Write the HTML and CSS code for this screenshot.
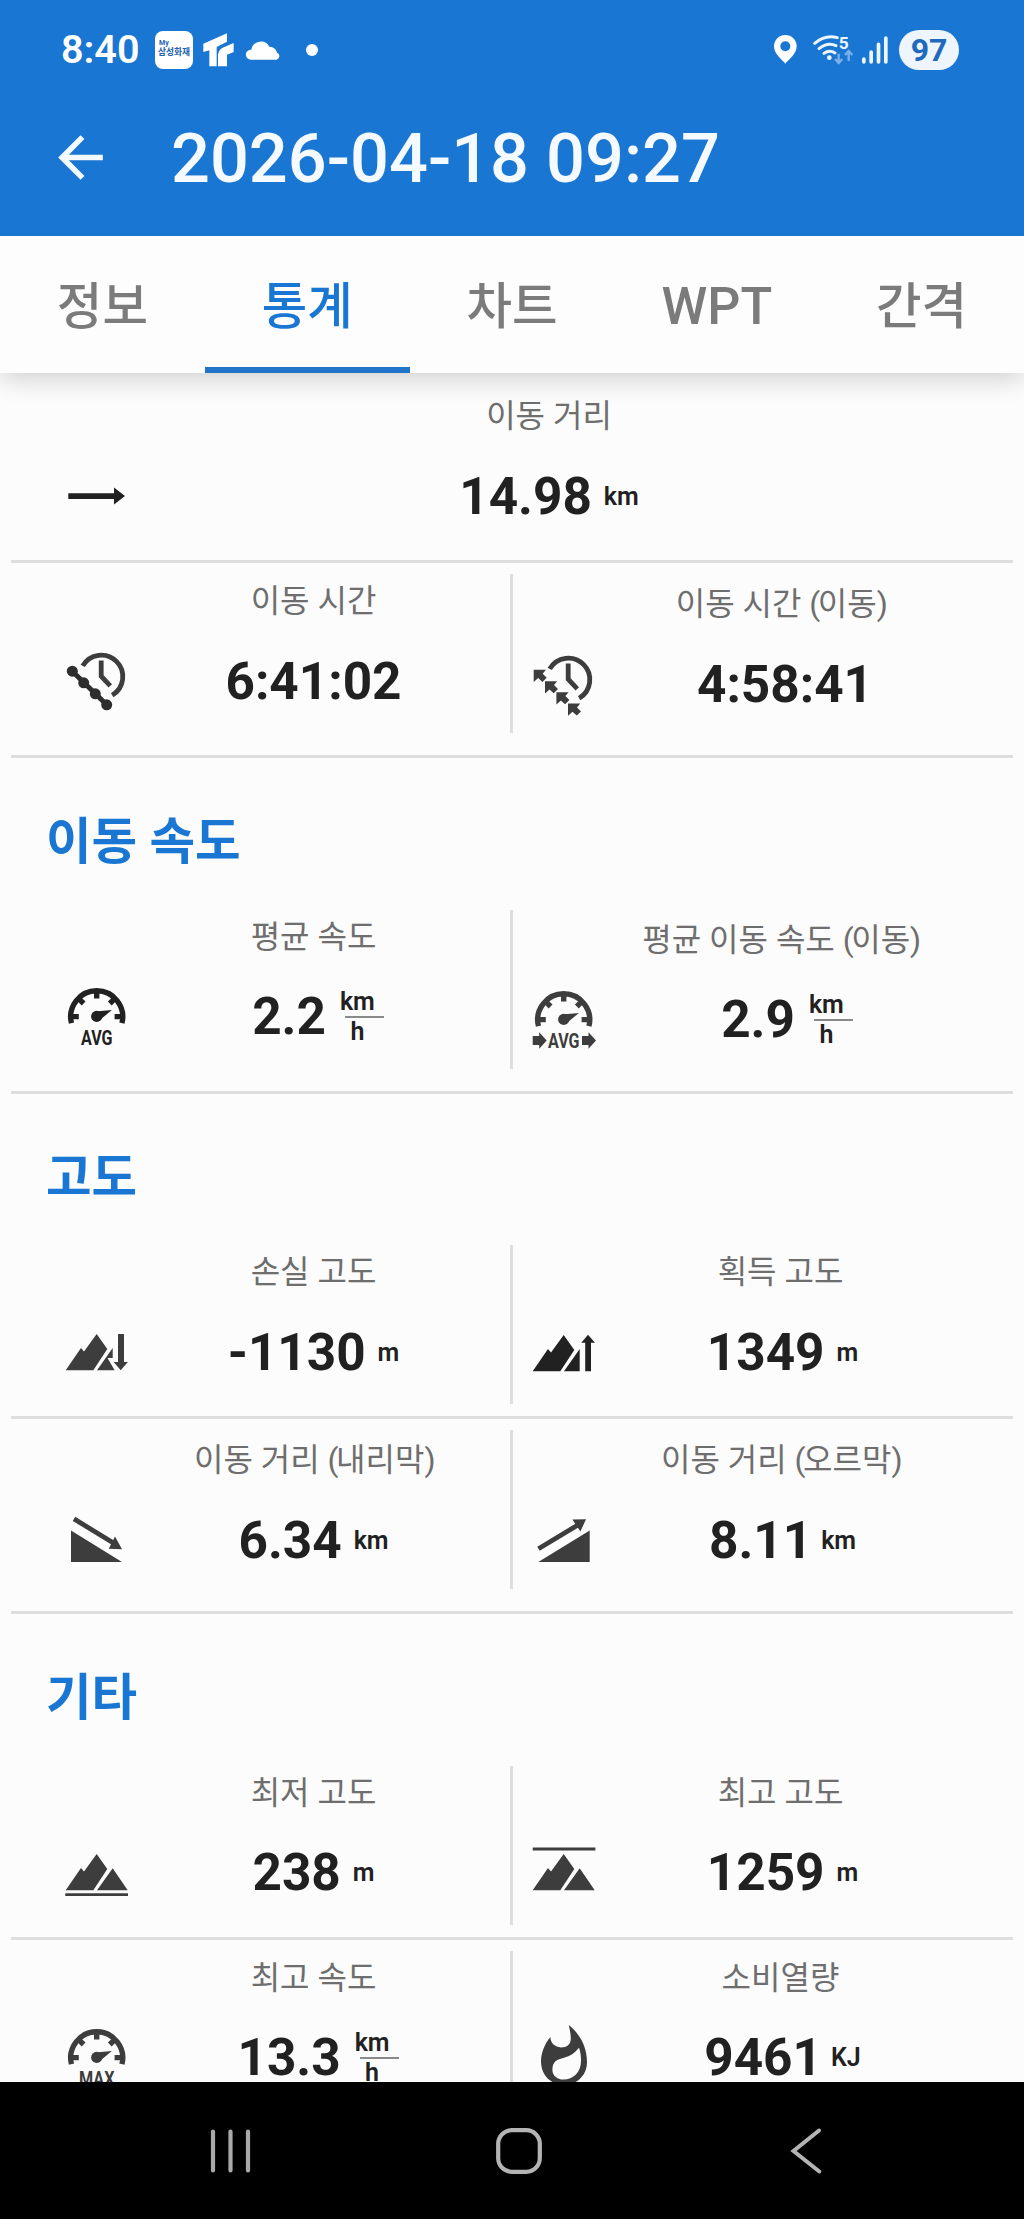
FILE: index.html
```html
<!DOCTYPE html>
<html lang="ko">
<head>
<meta charset="utf-8">
<title>2026-04-18 09:27</title>
<link rel="stylesheet" href="styles.css">
</head>
<body>
<svg class="defs" width="0" height="0" aria-hidden="true">
  <defs>
    <g id="gauge">
      <path d="M6.5 39.2A26 26 0 1 1 56.9 39.2" fill="none" stroke="currentColor" stroke-width="5.4"/>
      <path d="M7 32.6h6.8M56.4 32.6h-6.8M31.7 8v6.4M14 14.9l4.6 4.6M49.4 14.9l-4.6 4.6" fill="none" stroke="currentColor" stroke-width="5.4"/>
      <circle cx="31.7" cy="32.4" r="5.6" fill="currentColor"/>
      <path d="M30.5 27.6L46.9 26 33.6 37z" fill="currentColor"/>
    </g>
    <g id="clock" fill="none" stroke="currentColor" stroke-width="4.8">
      <path d="M17.7 16.9A21.5 21.5 0 1 1 47.2 46.2"/>
      <path d="M36.2 11.5V27.2L45.3 36.8"/>
    </g>
    <path id="peak" d="M.7 50.3L16 28l3 3.4L31.7 14 42.3 29 28.3 50.3z" fill="currentColor"/>
    <path id="chip" d="M0 0h12.2L9 3.9l4 4-4.3 4.2-4.2-3.8L0 12.2z" fill="currentColor"/>
  </defs>
</svg>

<header class="top">
  <div class="status">
    <span class="time">8:40</span>
    <span class="app-badge"><b class="app-my">My</b><b class="app-name">삼성화재</b></span>
    <svg class="ic-tr" width="31" height="34" viewBox="609 99 93 102"><path fill="#fff" d="M610 131L681 100V125L650 141V199H628V151L610 156zM654 199V166Q655 150 668 143L701 129V156L681 164V199z"/></svg>
    <svg class="ic-cloud" width="35" height="20" viewBox="737 115 105 60"><path fill="#fff" d="M752 174a15 15 0 0 1-1-30h2a29 29 0 0 1 54-9 22 22 0 0 1 23 18 11 11 0 0 1-1 21z"/></svg>
    <i class="dot"></i>
    <span class="spring"></span>
    <svg class="ic-pin" width="23" height="29" viewBox="782 104 69 87"><path fill="#fff" fill-rule="evenodd" d="M816 104a34 34 0 0 0-34 34c0 23 22 38 34 52 12-14 34-29 34-52a34 34 0 0 0-34-34zm0 19a15 15 0 1 1 0 30 15 15 0 0 1 0-30z"/></svg>
    <svg class="ic-wifi" width="41" height="31" viewBox="899 103 123 93">
      <g fill="none" stroke="#eef6fd" stroke-width="9" stroke-linecap="round"><path d="M904 131Q936 104 972 114"/><path d="M917 147Q943 126 968 138"/><path d="M932 161Q948 149 965 160"/></g>
      <circle cx="948" cy="174" r="7" fill="#eef6fd"/>
      <text x="976" y="147" font-size="52" font-weight="700" fill="#eef6fd">5</text>
      <path d="M976 162v27m-11-11l11 12 11-12M1006 184v-30m-11 12l11-12 11 12" fill="none" stroke="#7db0e8" stroke-width="7"/>
    </svg>
    <svg class="ic-signal" width="26" height="28" viewBox="1047 105 78 84"><path d="M1052.500 174V183M1074.500 153V183M1096.500 130V183M1118.500 111V183" stroke="#eef6fd" stroke-width="11" stroke-linecap="round"/></svg>
    <span class="battery">97</span>
  </div>
  <div class="appbar">
    <svg class="back" width="67" height="67" viewBox="0 0 24 24"><path fill="#f4faff" d="M20 11H7.830l5.590-5.590L12 4l-8 8 8 8 1.410-1.410L7.830 13H20z"/></svg>
    <h1 class="title">2026-04-18 09:27</h1>
  </div>
</header>

<nav class="tabs">
  <a class="tab">정보</a><a class="tab active">통계</a><a class="tab">차트</a><a class="tab latin">WPT</a><a class="tab">간격</a>
</nav>

<main class="content">
  <section class="row first">
    <div class="cell wide">
      <div class="label">이동 거리</div>
      <svg class="icon dark" viewBox="0 0 64 64"><path fill="currentColor" d="M3.300 29.200H49V23.400L60 31.900 49 40.400V34.900H3.300z"/></svg>
      <div class="value">14.98<span class="unit">km</span></div>
    </div>
  </section>

  <section class="row last">
    <div class="cell">
      <div class="label">이동 시간</div>
      <svg class="icon" viewBox="0 0 64 64"><use href="#clock"/><path d="M7.300 22.200L41.700 55.800" stroke="#2e2e2e" stroke-width="5"/><g fill="#2e2e2e"><circle cx="7.300" cy="22.200" r="5.500"/><circle cx="18.700" cy="33.800" r="5.500"/><circle cx="30.300" cy="44.800" r="5.500"/><circle cx="41.700" cy="55.800" r="5.500"/></g></svg>
      <div class="value">6:41:02</div>
    </div>
    <i class="split"></i>
    <div class="cell low">
      <div class="label">이동 시간 <span class="paren">(</span>이동<span class="paren">)</span></div>
      <svg class="icon" viewBox="0 0 64 64"><use href="#clock"/><use href="#chip" x="1.700" y="17.800"/><use href="#chip" x="13" y="29.200"/><use href="#chip" x="24.400" y="40.200"/><use href="#chip" x="36" y="51.500"/></svg>
      <div class="value plain">4:58:41</div>
    </div>
  </section>

  <h2 class="heading">이동 속도</h2>
  <section class="row last">
    <div class="cell">
      <div class="label">평균 속도</div>
      <svg class="icon dark" viewBox="0 0 64 64"><use href="#gauge"/><text class="tag" x="16" y="61" textLength="31.500" lengthAdjust="spacingAndGlyphs">AVG</text></svg>
      <div class="value">2.2<span class="frac"><span>km</span><i></i><span>h</span></span></div>
    </div>
    <i class="split"></i>
    <div class="cell low">
      <div class="label">평균 이동 속도 <span class="paren">(</span>이동<span class="paren">)</span></div>
      <svg class="icon" viewBox="0 0 64 64"><use href="#gauge"/><text class="tag" x="16" y="61" textLength="31.500" lengthAdjust="spacingAndGlyphs">AVG</text><path fill="currentColor" d="M.700 49h6.500v-3.800l7.500 8.300-7.500 8.300V58H.700zM50 49h6.500v-3.800l7.500 8.300-7.500 8.300V58H50z"/></svg>
      <div class="value">2.9<span class="frac"><span>km</span><i></i><span>h</span></span></div>
    </div>
  </section>

  <h2 class="heading">고도</h2>
  <section class="row">
    <div class="cell">
      <div class="label">손실 고도</div>
      <svg class="icon" viewBox="0 0 64 64"><use href="#peak"/><path fill="currentColor" d="M32 50.300L47.700 28V38H42.500L49.600 50.300zM53 14h6v28h3.900l-7.200 8.300L48.700 42H53z"/></svg>
      <div class="value">-1130<span class="unit">m</span></div>
    </div>
    <i class="split"></i>
    <div class="cell">
      <div class="label">획득 고도</div>
      <svg class="icon dark" viewBox="0 0 64 64"><use href="#peak" y="1"/><path fill="currentColor" d="M32 51.300L47.700 29V51.300zM53.200 51.300V22.800H49.300L56 14.800 63 22.800H59V51.300z"/></svg>
      <div class="value">1349<span class="unit">m</span></div>
    </div>
  </section>
  <section class="row last">
    <div class="cell low">
      <div class="label">이동 거리 <span class="paren">(</span>내리막<span class="paren">)</span></div>
      <svg class="icon" viewBox="0 0 64 64"><path fill="currentColor" d="M6 22.600V53.900H57zM50 28.400L57 41.200 43.700 40.800z"/><path d="M9 10.900L49.300 35.500" stroke="currentColor" stroke-width="4.800"/></svg>
      <div class="value">6.34<span class="unit">km</span></div>
    </div>
    <i class="split"></i>
    <div class="cell low">
      <div class="label">이동 거리 <span class="paren">(</span>오르막<span class="paren">)</span></div>
      <svg class="icon" viewBox="0 0 64 64"><path fill="currentColor" d="M6.300 53.900L57.700 22.600V53.900zM54 11.200L40.400 11.600 48.400 23.600z"/><path d="M6.500 40.800L46.400 16.700" stroke="currentColor" stroke-width="4.800"/></svg>
      <div class="value">8.11<span class="unit tight">km</span></div>
    </div>
  </section>

  <h2 class="heading">기타</h2>
  <section class="row">
    <div class="cell">
      <div class="label">최저 고도</div>
      <svg class="icon" viewBox="0 0 64 64"><use href="#peak"/><path fill="currentColor" d="M32 50.300L47.700 28.300 62.700 50.300zM.300 53.200H63v2.900H.300z"/></svg>
      <div class="value">238<span class="unit">m</span></div>
    </div>
    <i class="split"></i>
    <div class="cell">
      <div class="label">최고 고도</div>
      <svg class="icon" viewBox="0 0 64 64"><use href="#peak"/><path fill="currentColor" d="M32 50.300L47.700 28.300 62.700 50.300zM.700 7.600H63.400v2.900H.700z"/></svg>
      <div class="value">1259<span class="unit">m</span></div>
    </div>
  </section>
  <section class="row">
    <div class="cell">
      <div class="label">최고 속도</div>
      <svg class="icon" viewBox="0 0 64 64"><use href="#gauge"/><text class="tag" x="14" y="61" textLength="35.500" lengthAdjust="spacingAndGlyphs">MAX</text></svg>
      <div class="value">13.3<span class="frac"><span>km</span><i></i><span>h</span></span></div>
    </div>
    <i class="split"></i>
    <div class="cell">
      <div class="label">소비열량</div>
      <svg class="icon" viewBox="0 0 64 64"><path fill="currentColor" fill-rule="evenodd" d="M36.700 0s2.100 7.600 2.100 13.700c0 5.900-3.900 8.700-9.800 8.700-6 0-10.500-4.300-10.600-10.300C12.500 19 9 28.500 9 36.500 9 50 19 60 32 60S55 50 55 37.200C55 21.700 48 9 36.700 0zM47 22.800C48.600 27 49 31 49 36 49 47 41.500 54.600 31.400 54.600 25 54.600 20.400 50.500 20.400 45c0-8.500 4.600-10.600 11.600-12.200C38 31.400 43 28 47 22.800z"/></svg>
      <div class="value">9461<span class="unit tight">KJ</span></div>
    </div>
  </section>
</main>

<footer class="navbar">
  <svg width="40" height="46" viewBox="0 0 40 46"><path d="M3 3.500V42.500M20.500 3.500V42.500M38 3.500V42.500" stroke="#a9a9a9" stroke-width="4.200" stroke-linecap="round"/></svg>
  <svg class="home" width="48" height="48" viewBox="0 0 48 48"><rect x="3.200" y="3.200" width="41.600" height="41.600" rx="13.500" fill="none" stroke="#b4b4b4" stroke-width="4.200"/></svg>
  <svg width="32" height="48" viewBox="0 0 32 48"><path d="M29 3.500L3.500 24 29.300 44.500" fill="none" stroke="#b4b4b4" stroke-width="4" stroke-linecap="round"/></svg>
</footer>
</body>
</html>
```
FILE: styles.css
```css
* { box-sizing: border-box; }

body {
  margin: 0;
  width: 1024px;
  height: 2219px;
  display: flex;
  flex-direction: column;
  overflow: hidden;
  background: #fcfcfc;
  color: #212121;
  font-family: Roboto, "Noto Sans CJK KR", sans-serif;
}

.defs { position: absolute; }
svg { display: block; flex: none; overflow: visible; }

/* status bar and app bar */
.top {
  position: relative;
  z-index: 2;
  flex: none;
  height: 236px;
  background: #1976d2;
  color: #fff;
}

.status {
  height: 98px;
  padding: 1px 65px 0 61px;
  display: flex;
  align-items: center;
}

.time {
  width: 94px;
  font-size: 39.500px;
  font-weight: 600;
  line-height: 40px;
}

.app-badge {
  width: 38px;
  height: 38px;
  padding: 8px 0 0 3px;
  border-radius: 8px;
  background: #fff;
  color: #1b62ae;
  display: flex;
  flex-direction: column;
  white-space: nowrap;
}
.app-my { font-size: 7px; line-height: 8px; padding-left: 1px; }
.app-name { font-size: 8.700px; line-height: 11px; }

.ic-tr { margin-left: 10px; }
.ic-cloud { margin-left: 12px; }
.dot {
  width: 12px;
  height: 12px;
  margin-left: 25px;
  border-radius: 50%;
  background: #fff;
}
.spring { flex: 1; }
.ic-wifi { margin-left: 16px; }
.ic-signal { margin-left: 8px; }
.battery {
  width: 60px;
  height: 40px;
  margin-left: 11px;
  border-radius: 20px;
  background: #eef5fc;
  color: #2069bd;
  font-size: 32px;
  font-weight: 700;
  line-height: 41px;
  text-align: center;
}

.appbar {
  height: 118px;
  padding-left: 47px;
  display: flex;
  align-items: center;
}
.title {
  margin: 3px 0 0 57px;
  color: #f4faff;
  font-size: 68.500px;
  font-weight: 500;
  line-height: 80px;
}

/* tabs */
.tabs {
  position: relative;
  z-index: 1;
  flex: none;
  height: 137px;
  display: grid;
  grid-template-columns: repeat(5, 1fr);
  background: #fdfdfd;
  box-shadow: 0 4px 26px rgba(0, 0, 0, .2);
}
.tab {
  padding-top: 35px;
  border-bottom: 6px solid transparent;
  color: #7b7b7b;
  font-size: 49.500px;
  font-weight: 500;
  line-height: 72px;
  text-align: center;
}
.tab.latin { font-size: 52px; }
.tab.active {
  color: #1976d2;
  border-bottom-color: #2075c9;
}

/* statistics */
.content {
  flex: 1;
  min-height: 0;
  overflow: hidden;
}

.row {
  margin: 0 11px;
  padding: 11px 35px 12px;
  border-bottom: 3px solid #dedede;
  display: grid;
  grid-template-columns: 464px 3px 465px;
}
.row.first { padding-top: 16px; padding-bottom: 12px; }
.row.last { padding-bottom: 22px; }

.split { background: #dedede; }

.cell {
  height: 159px;
  display: grid;
  grid-template-columns: 102px 331px;
  grid-template-rows: 54px 105px;
  align-items: center;
}
.cell.wide {
  grid-column: 1 / -1;
  grid-template-columns: 102px 802px;
}
.cell.low { padding-top: 3px; }

.label {
  grid-column: 2;
  color: #6e6e6e;
  font-size: 32px;
  line-height: 46px;
  text-align: center;
  white-space: nowrap;
}
.paren { letter-spacing: -2.500px; }

.icon {
  width: 64px;
  height: 64px;
  margin-left: 19px;
  color: #3d3d3d;
}
.icon.dark { color: #212121; }
.tag {
  fill: currentColor;
  font-size: 20px;
  font-weight: 700;
}

.value {
  padding-top: 2px;
  display: flex;
  justify-content: center;
  align-items: center;
  font-size: 51.300px;
  font-weight: 700;
  line-height: 60px;
}
.split + .cell .value { padding-left: 4px; }
.split + .cell .value.plain { padding-left: 9px; }
.unit {
  margin-left: 12px;
  font-size: 25px;
  font-weight: 600;
  line-height: 30px;
}
.unit.tight { margin-left: 9px; }
.frac {
  margin-left: 14px;
  display: flex;
  flex-direction: column;
  align-items: center;
  font-size: 25px;
  font-weight: 600;
  line-height: 28px;
}
.frac i {
  width: 39px;
  height: 2px;
  margin: 0 -10px 0 4px;
  background: #8a8a8a;
}

.heading {
  height: 140.500px;
  margin: 0;
  padding: 48px 0 0 46px;
  color: #1976d2;
  font-size: 49.500px;
  font-weight: 700;
  line-height: 72px;
}

/* system navigation */
.navbar {
  position: relative;
  flex: none;
  height: 137px;
  padding: 0 202px 0 210px;
  background: #000;
  display: flex;
  justify-content: space-between;
  align-items: center;
}
.home { margin-right: 2px; }
```
